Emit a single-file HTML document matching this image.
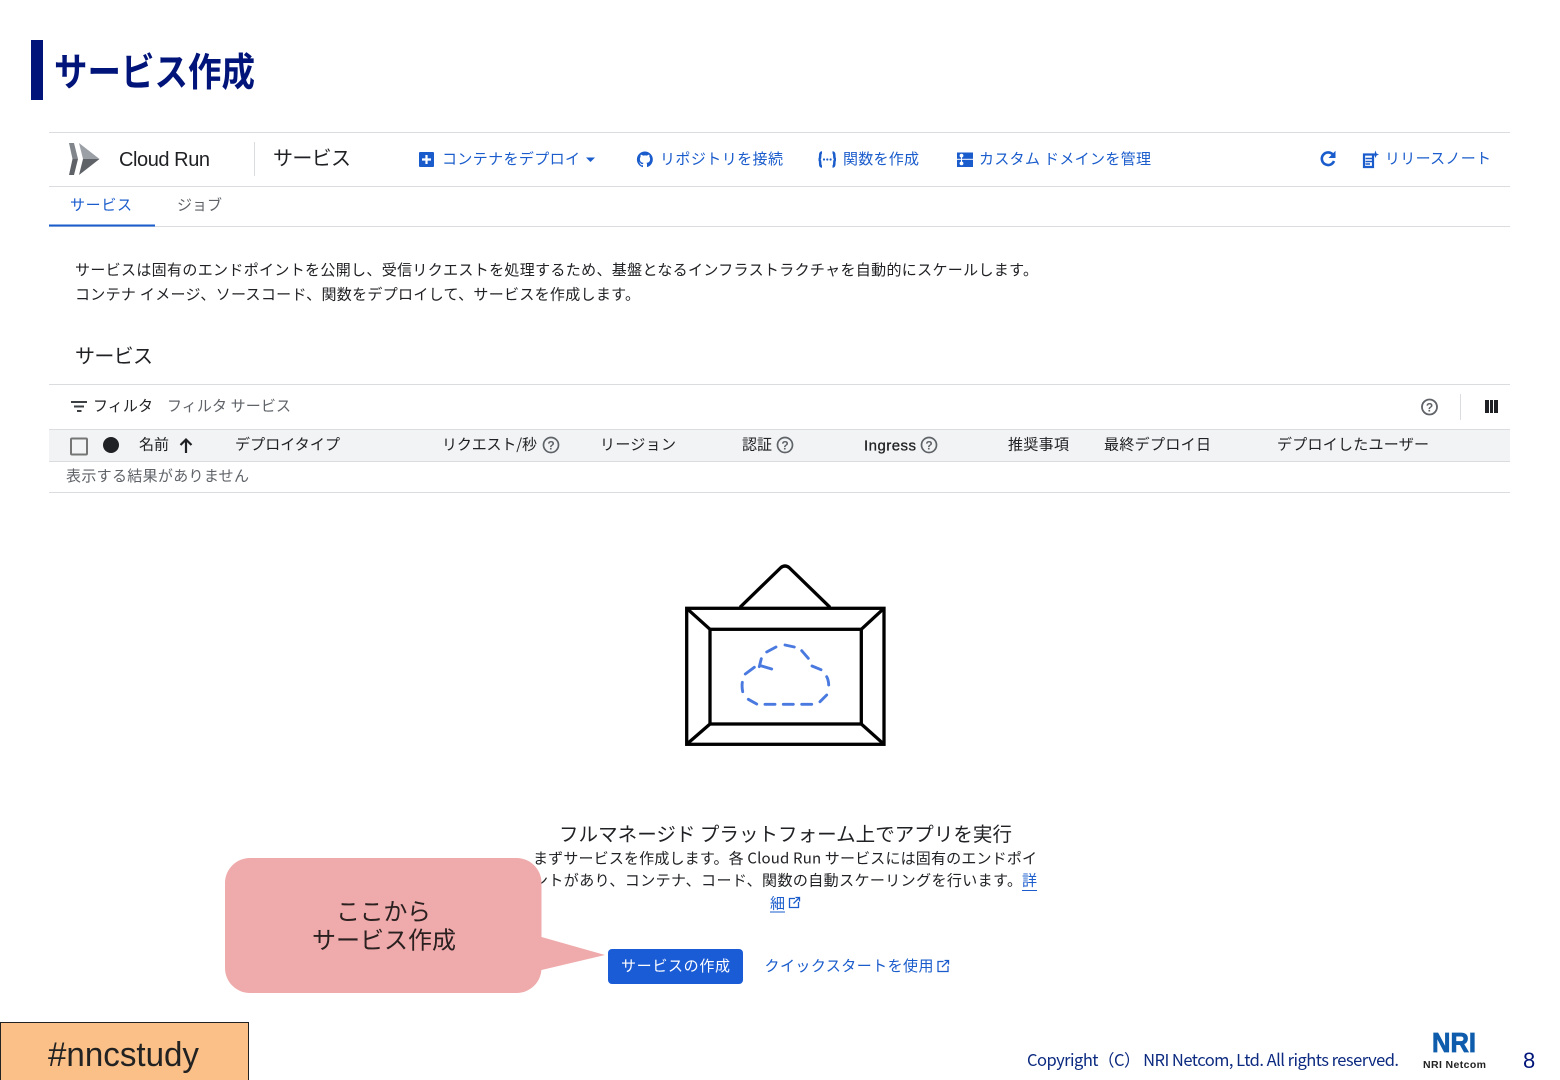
<!DOCTYPE html>
<html lang="ja">
<head>
<meta charset="utf-8">
<title>サービス作成</title>
<style>
html,body{margin:0;padding:0;background:#fff;width:1560px;height:1080px;overflow:hidden}
svg{display:block}
text{font-family:"Liberation Sans","Noto Sans CJK JP",sans-serif;white-space:pre}
.j{font-family:"Noto Sans CJK JP","Liberation Sans",sans-serif;font-size:15px;fill:#202124}
.b{fill:#1a5ccc}
.g{fill:#5f6368}
.l{stroke:#dadce0;stroke-width:1;fill:none}
</style>
</head>
<body>
<svg width="1560" height="1080" viewBox="0 0 1560 1080" xmlns="http://www.w3.org/2000/svg">
<rect width="1560" height="1080" fill="#fff"/>

<!-- slide title -->
<rect x="31" y="40" width="12" height="60" fill="#00147a"/>
<text class="j" x="54" y="86" style="font-size:39px;font-weight:700;fill:#00147a" textLength="201" lengthAdjust="spacingAndGlyphs">サービス作成</text>

<!-- header lines -->
<path class="l" d="M49 132.500H1510M49 186.500H1510M49 226.500H1510M49 384.500H1510M49 492.500H1510M254.500 142V176M1460.500 394V420"/>

<!-- Cloud Run logo -->
<path d="M69 143H74L78 159H72.500Z" fill="#80868b"/>
<path d="M72.500 159H78L74 175H69Z" fill="#5f6368"/>
<path d="M79 143L99.500 159H83Z" fill="#9aa0a6"/>
<path d="M83 159H99.500L79 175Z" fill="#5f6368"/>
<text x="119" y="166" style="font-size:20px;fill:#202124" textLength="91">Cloud Run</text>
<text class="j" x="273" y="165" style="font-size:20px" textLength="78">サービス</text>

<!-- toolbar -->
<rect x="419" y="152" width="15" height="15" rx="1" class="b"/>
<path d="M426.500 155V164M422 159.500H431" stroke="#fff" stroke-width="2.200"/>
<text class="j b" x="442" y="164" textLength="138">コンテナをデプロイ</text>
<path d="M586 157.500H595L590.500 162Z" class="b"/>

<path class="b" d="M645 151.500a8 8 0 0 0-2.600 15.600c.4.100.6-.2.6-.4v-1.500c-2.200.5-2.700-1-2.700-1-.4-.9-.9-1.200-.9-1.200-.7-.5 0-.5 0-.5.8.1 1.200.8 1.200.8.7 1.200 1.900.9 2.400.7.1-.5.3-.9.5-1.100-1.800-.2-3.600-.9-3.600-3.900 0-.9.3-1.600.8-2.100-.1-.2-.4-1 .1-2.100 0 0 .7-.2 2.200.8a7.600 7.600 0 0 1 4 0c1.500-1 2.200-.8 2.200-.8.4 1.100.2 1.900.1 2.100.5.5.8 1.200.8 2.100 0 3.100-1.900 3.700-3.700 3.900.3.300.6.800.6 1.500v2.200c0 .2.100.5.600.4A8 8 0 0 0 645 151.500Z"/>
<text class="j b" x="660" y="164" textLength="123">リポジトリを接続</text>

<path d="M822 152.500C819.500 152.500 820.500 156 820 158C819.700 159 819 159.500 818.500 159.500C819 159.500 819.700 160 820 161C820.500 163 819.500 166.500 822 166.500" fill="none" stroke="#1a5ccc" stroke-width="2.500"/>
<path d="M832.500 152.500C835 152.500 834 156 834.500 158C834.800 159 835.500 159.500 836 159.500C835.500 159.500 834.800 160 834.500 161C834 163 835 166.500 832.500 166.500" fill="none" stroke="#1a5ccc" stroke-width="2.500"/>
<circle cx="824" cy="159.500" r="1.100" class="b"/><circle cx="827.300" cy="159.500" r="1.100" class="b"/><circle cx="830.600" cy="159.500" r="1.100" class="b"/>
<text class="j b" x="843" y="164" textLength="76">関数を作成</text>

<path class="b" d="M957 152.500H973V158.800H957Z"/>
<path class="b" d="M957 159.800H973V167H957Z"/>
<circle cx="961.500" cy="155.600" r="1.900" fill="#fff"/><circle cx="961.500" cy="163.400" r="1.900" fill="#fff"/>
<path d="M961.500 156L961.500 163" stroke="#fff" stroke-width="1"/>
<text class="j b" x="979" y="164" textLength="172">カスタム ドメインを管理</text>

<path d="M1332.800 154.500A6.300 6.300 0 1 0 1334 161" fill="none" stroke="#1a5ccc" stroke-width="2.600"/>
<path d="M1335.500 150.800V158H1328.500Z" class="b"/>

<path d="M1364 154.500H1373V167H1364Z" fill="none" stroke="#1a5ccc" stroke-width="2.200"/>
<path d="M1365.500 158.500H1372M1365.500 161.500H1372M1365.500 164H1370" stroke="#1a5ccc" stroke-width="1.600"/>
<path d="M1375.500 150.500L1376.500 153.500L1379 154.500L1376.500 155.500L1375.500 158L1374.500 155.500L1372.500 154.500L1374.500 153.500Z" class="b"/>
<text class="j b" x="1385" y="163.500" textLength="106">リリースノート</text>

<!-- tabs -->
<text class="j b" x="70" y="210" textLength="62">サービス</text>
<rect x="49" y="224.500" width="106" height="2" fill="#1a5ccc"/>
<text class="j g" x="177" y="210" textLength="45">ジョブ</text>

<!-- description -->
<text class="j" x="75" y="275" textLength="963">サービスは固有のエンドポイントを公開し、受信リクエストを処理するため、基盤となるインフラストラクチャを自動的にスケールします。</text>
<text class="j" x="75" y="299.500" textLength="565">コンテナ イメージ、ソースコード、関数をデプロイして、サービスを作成します。</text>
<text class="j" x="75" y="363" style="font-size:20px" textLength="78">サービス</text>

<!-- filter bar -->
<path d="M71 402H87M74 406.500H84M77 411H81.500" stroke="#3c4043" stroke-width="2" fill="none"/>
<text class="j" x="93" y="411" textLength="60">フィルタ</text>
<text class="j g" x="167" y="411" textLength="124">フィルタ サービス</text>
<circle cx="1429.500" cy="407" r="7.500" fill="none" stroke="#5f6368" stroke-width="1.800"/>
<text x="1429.500" y="411.500" text-anchor="middle" style="font-size:12px;font-weight:700;fill:#5f6368">?</text>
<path d="M1485 400H1489V413H1485ZM1490 400H1493V413H1490ZM1494 400H1498V413H1494Z" fill="#202124"/>

<!-- table head -->
<rect x="49" y="429" width="1461" height="33" fill="#f1f3f4"/>
<path class="l" d="M49 429.500H1510M49 461.500H1510"/>
<rect x="71" y="438.500" width="16" height="16" rx="1" fill="none" stroke="#757575" stroke-width="2"/>
<circle cx="111" cy="445" r="8" fill="#202124"/>
<text class="j" x="139" y="449.500" textLength="30">名前</text>
<path d="M186 453V440M180.500 445L186 439.500L191.500 445" fill="none" stroke="#202124" stroke-width="2.200"/>
<text class="j" x="235" y="449.500" textLength="105">デプロイタイプ</text>
<text class="j" x="442" y="449.500" textLength="95">リクエスト/秒</text>
<circle cx="551" cy="445" r="7.500" fill="none" stroke="#5f6368" stroke-width="1.700"/>
<text x="551" y="449.500" text-anchor="middle" style="font-size:12px;font-weight:700;fill:#5f6368">?</text>
<text class="j" x="600" y="449.500" textLength="76">リージョン</text>
<text class="j" x="742" y="449.500" textLength="30">認証</text>
<circle cx="785" cy="445" r="7.500" fill="none" stroke="#5f6368" stroke-width="1.700"/>
<text x="785" y="449.500" text-anchor="middle" style="font-size:12px;font-weight:700;fill:#5f6368">?</text>
<text x="864" y="450.500" style="font-size:15px;fill:#202124;stroke:#202124;stroke-width:.3" textLength="52">Ingress</text>
<circle cx="929" cy="445" r="7.500" fill="none" stroke="#5f6368" stroke-width="1.700"/>
<text x="929" y="449.500" text-anchor="middle" style="font-size:12px;font-weight:700;fill:#5f6368">?</text>
<text class="j" x="1008" y="449.500" textLength="61">推奨事項</text>
<text class="j" x="1104" y="449.500" textLength="107">最終デプロイ日</text>
<text class="j" x="1277" y="449.500" textLength="152">デプロイしたユーザー</text>

<text class="j g" x="66" y="481" textLength="183">表示する結果がありません</text>

<!-- picture frame illustration -->
<g fill="none" stroke="#000" stroke-width="3.300">
<rect x="686.700" y="608.300" width="197.300" height="136"/>
<rect x="710" y="629.300" width="151.300" height="94.700"/>
<path d="M686.700 608.300L710 629.300M884 608.300L861.300 629.300M686.700 744.300L710 724M884 744.300L861.300 724"/>
<path d="M740 607.300L781 567.500Q785 564.500 789 567.500L830 607.300"/>
</g>
<g fill="none" stroke="#4a7ae0" stroke-width="2.900" stroke-linecap="round">
<path d="M759.300 666.700L761.300 658.700M766.700 652L776 647M785 645L794.300 647M801.700 650.700L808.300 658.300M812 666L821 669.700M826.700 676.700Q828.500 680 828.700 685M826.700 695L820 701.700M811.700 704.300H801.700M793.300 704.300H783.300M775 704.300H765M756.700 704L748.300 699.300M742.700 691.700Q741.700 687 742.300 682.300M745.300 674L754.300 667.300M761.700 666L771.700 669"/>
</g>

<!-- empty state text -->
<text class="j" x="559" y="841" style="font-size:19.500px" textLength="453">フルマネージド プラットフォーム上でアプリを実行</text>
<text class="j" x="533" y="863.500" textLength="504">まずサービスを作成します。各 Cloud Run サービスには固有のエンドポイ</text>
<text class="j" x="533" y="885.500" textLength="489">ントがあり、コンテナ、コード、関数の自動スケーリングを行います。</text>
<text class="j b" x="1022" y="885.500" textLength="15">詳</text>
<path d="M1022 890.500H1037M770 912H785" stroke="#1a5ccc" stroke-width="1"/>
<text class="j b" x="770" y="908.500" textLength="15">細</text>
<path d="M795 898.500H789.500V907.500H798.500V902M793.500 903.500L799 898M795.500 897.500H799.500V901.500" fill="none" stroke="#1a5ccc" stroke-width="1.300"/>

<rect x="608" y="949" width="135" height="35" rx="4" fill="#1a5bd6"/>
<text class="j" x="621" y="971" style="fill:#fff" textLength="109">サービスの作成</text>
<text class="j b" x="764.500" y="971" textLength="169">クイックスタートを使用</text>
<path d="M943.500 961.500H938V971.500H948V966M942 967L948 961M944.500 960.500H948.500V964.500" fill="none" stroke="#1a5ccc" stroke-width="1.300"/>

<!-- callout -->
<path d="M250 858H516.500A25 25 0 0 1 541.500 883V937L605 955L541.500 970V968A25 25 0 0 1 516.500 993H250A25 25 0 0 1 225 968V883A25 25 0 0 1 250 858Z" fill="#efaaab"/>
<text class="j" x="336" y="920" style="font-size:24px;fill:#2a2020" textLength="95">ここから</text>
<text class="j" x="312" y="948.500" style="font-size:24px;fill:#2a2020" textLength="144">サービス作成</text>

<!-- hashtag -->
<rect x="0.500" y="1022.500" width="248" height="60" fill="#fac088" stroke="#222" stroke-width="1"/>
<text x="48" y="1066" style="font-size:34px;fill:#222" textLength="151" lengthAdjust="spacingAndGlyphs">#nncstudy</text>

<!-- footer -->
<text class="j" x="1027" y="1066" style="font-size:16.500px;fill:#0c2a80" textLength="372">Copyright（C） NRI Netcom, Ltd. All rights reserved.</text>
<text x="1432" y="1052" style="font-size:28px;font-weight:700;fill:#0f5cad;stroke:#0f5cad;stroke-width:.8" textLength="44" lengthAdjust="spacingAndGlyphs">NRI</text>
<text x="1423" y="1068" style="font-size:10.500px;font-weight:700;fill:#222" textLength="63">NRI Netcom</text>
<text x="1523" y="1068" style="font-size:22px;fill:#00147a">8</text>
</svg>
</body>
</html>
